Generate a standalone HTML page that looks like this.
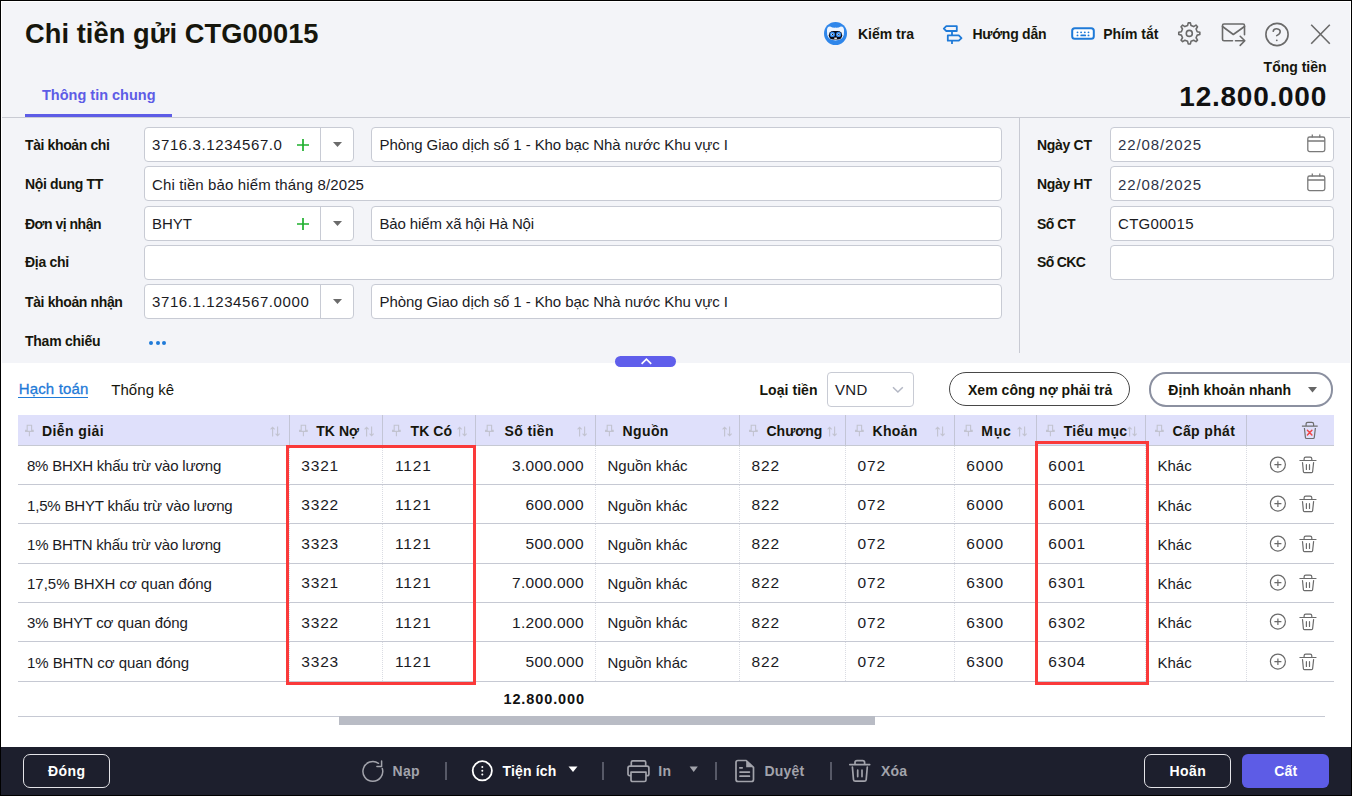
<!DOCTYPE html>
<html><head><meta charset="utf-8"><title>Chi tiền gửi</title>
<style>
html,body{margin:0;padding:0;width:1352px;height:796px;overflow:hidden;background:#fff;}
body{position:relative;font-family:"Liberation Sans", sans-serif;}
.t{position:absolute;white-space:pre;font-family:"Liberation Sans", sans-serif;}
.r{position:absolute;box-sizing:content-box;}
svg.r{overflow:visible;}
</style></head><body>
<div class="r" style="left:0px;top:0px;width:1352px;height:796px;background:#000;"></div>
<div class="r" style="left:1px;top:1px;width:1350px;height:794px;background:#fff;"></div>
<div class="r" style="left:2px;top:2px;width:1348px;height:361px;background:#f3f4f8;"></div>
<div class="r" style="left:2px;top:363px;width:1348px;height:383px;background:#fff;"></div>
<div class="r" style="left:1px;top:747px;width:1350px;height:48px;background:#1d1f2d;"></div>
<div class="t" style="left:25px;top:20.23px;font-size:27.25px;line-height:27.25px;font-weight:bold;color:#16160c;letter-spacing:0.06px;">Chi tiền gửi CTG00015</div>
<div class="t" style="left:42px;top:88.13px;font-size:14.5px;line-height:14.5px;font-weight:bold;color:#5d5ce6;">Thông tin chung</div>
<div class="r" style="left:25px;top:114px;width:147px;height:3px;background:#5d5ce6;"></div>
<div class="r" style="left:2px;top:117px;width:1348px;height:1px;background:#c9cbd3;"></div>
<svg class="r" style="left:824px;top:22px;" width="23" height="23" viewBox="0 0 23 23"><circle cx="11.5" cy="11.5" r="11.5" fill="#2f86ea"/>
<path d="M3 9.5 Q2.6 4.2 6.2 4.4 Q8.5 5.8 11.5 5.6 Q14.5 5.8 16.8 4.4 Q20.4 4.2 20 9.5 Q20.8 18 11.5 18.6 Q2.2 18 3 9.5Z" fill="#eef5ff"/>
<rect x="4.8" y="9" width="13.4" height="8.6" rx="4.3" fill="#0b0b14"/>
<circle cx="8.4" cy="12.4" r="2.6" fill="#2f86ea"/><circle cx="14.6" cy="12.4" r="2.6" fill="#2f86ea"/>
<circle cx="8.4" cy="12.4" r="1.2" fill="#dbe9fb"/><circle cx="14.6" cy="12.4" r="1.2" fill="#dbe9fb"/>
<circle cx="8.6" cy="12.4" r="0.6" fill="#111"/><circle cx="14.8" cy="12.4" r="0.6" fill="#111"/>
<rect x="10.3" y="15.6" width="2.6" height="1.3" fill="#fff"/></svg>
<div class="t" style="left:858px;top:27.15px;font-size:14px;line-height:14px;font-weight:bold;color:#16160c;">Kiểm tra</div>
<svg class="r" style="left:938px;top:20px;" width="26" height="26" viewBox="0 0 26 26"><g fill="none" stroke="#1f7ad8" stroke-width="1.8" stroke-linejoin="round">
<path d="M5.8 8.7 L8.3 6.2 H18.8 V11 H8.3 Z"/><path d="M9.8 15.4 H20.8 L23.5 18.1 L20.8 20.7 H9.8 Z"/>
<path d="M14 11 V15.4 M14 20.7 V24"/></g></svg>
<div class="t" style="left:972.4px;top:27.15px;font-size:14px;line-height:14px;font-weight:bold;color:#16160c;letter-spacing:-0.25px;">Hướng dẫn</div>
<svg class="r" style="left:1071px;top:27px;" width="24" height="13" viewBox="0 0 24 13"><rect x="1.2" y="1.2" width="21.6" height="10.6" rx="2.6" fill="#fff" stroke="#1f7ad8" stroke-width="2"/>
<g fill="#1f7ad8"><circle cx="6.5" cy="5.35" r="0.95"/><circle cx="10.1" cy="5.35" r="0.95"/><circle cx="13.8" cy="5.35" r="0.95"/><circle cx="17.5" cy="5.35" r="0.95"/>
<circle cx="6.5" cy="8.4" r="0.95"/><circle cx="17.5" cy="8.4" r="0.95"/></g><path d="M10.3 8.4 H14.2" stroke="#1f7ad8" stroke-width="1.9" stroke-linecap="round"/></svg>
<div class="t" style="left:1103.2px;top:27.15px;font-size:14px;line-height:14px;font-weight:bold;color:#16160c;">Phím tắt</div>
<svg class="r" style="left:1177px;top:21px;" width="25" height="25" viewBox="0 0 25 25"><g fill="none" stroke="#6a6a6a" stroke-width="1.6" stroke-linejoin="round">
<path d="M10.60 4.48 L11.22 1.86 L13.38 1.86 L14.00 4.48 L16.69 5.60 L18.99 4.18 L20.52 5.71 L19.10 8.01 L20.22 10.70 L22.84 11.32 L22.84 13.48 L20.22 14.10 L19.10 16.79 L20.52 19.09 L18.99 20.62 L16.69 19.20 L14.00 20.32 L13.38 22.94 L11.22 22.94 L10.60 20.32 L7.91 19.20 L5.61 20.62 L4.08 19.09 L5.50 16.79 L4.38 14.10 L1.76 13.48 L1.76 11.32 L4.38 10.70 L5.50 8.01 L4.08 5.71 L5.61 4.18 L7.91 5.60Z"/><circle cx="12.3" cy="12.4" r="3"/></g></svg>
<svg class="r" style="left:1220px;top:22px;" width="27" height="26" viewBox="0 0 27 26"><g fill="none" stroke="#6a6a6a" stroke-width="1.6" stroke-linejoin="round" stroke-linecap="round">
<path d="M12.5 18.8 H4 Q2.5 18.8 2.5 17.3 V3.5 Q2.5 2 4 2 H23 Q24.5 2 24.5 3.5 V12.8"/><path d="M2.5 4.5 L13.3 12.5 L24.5 4.5"/>
<path d="M15.5 18.8 H24.7 M20.2 14.3 L24.8 18.8 L20.2 23.4"/></g></svg>
<svg class="r" style="left:1264px;top:22px;" width="26" height="26" viewBox="0 0 26 26"><g fill="none" stroke="#6a6a6a" stroke-width="1.6" stroke-linecap="round">
<circle cx="13" cy="12.5" r="11.1"/><path d="M9.2 9.3 Q9.6 6.6 12.8 6.7 Q16.3 7 16.2 9.8 Q16.1 12 12.7 13.6"/></g>
<circle cx="12.8" cy="18.3" r="0.9" fill="#6a6a6a"/></svg>
<svg class="r" style="left:1310px;top:24px;" width="21" height="21" viewBox="0 0 21 21"><path d="M1.2 0.8 L19.8 19.7 M19.8 0.8 L1.2 19.7" stroke="#6a6a6a" stroke-width="1.6" fill="none"/></svg>
<div class="t" style="right:25.40000000000009px;top:60.25px;font-size:14px;line-height:14px;font-weight:bold;color:#16160c;text-align:right;">Tổng tiền</div>
<div class="t" style="right:25px;top:83.30px;font-size:28px;line-height:28px;font-weight:bold;color:#111;text-align:right;letter-spacing:0.75px;">12.800.000</div>
<div class="r" style="left:1019px;top:118px;width:1px;height:235px;background:#c8cad3;"></div>
<div class="t" style="left:25px;top:138.15px;font-size:14px;line-height:14px;font-weight:bold;color:#16160c;letter-spacing:-0.38px;">Tài khoản chi</div>
<div class="t" style="left:25px;top:177.45px;font-size:14px;line-height:14px;font-weight:bold;color:#16160c;letter-spacing:-0.33px;">Nội dung TT</div>
<div class="t" style="left:25px;top:216.55px;font-size:14px;line-height:14px;font-weight:bold;color:#16160c;letter-spacing:-0.5px;">Đơn vị nhận</div>
<div class="t" style="left:25px;top:255.45px;font-size:14px;line-height:14px;font-weight:bold;color:#16160c;letter-spacing:-0.31px;">Địa chỉ</div>
<div class="t" style="left:25px;top:294.65px;font-size:14px;line-height:14px;font-weight:bold;color:#16160c;letter-spacing:-0.37px;">Tài khoản nhận</div>
<div class="t" style="left:25px;top:333.95px;font-size:14px;line-height:14px;font-weight:bold;color:#16160c;letter-spacing:-0.25px;">Tham chiếu</div>
<div class="r" style="left:149.0px;top:341px;width:4px;height:4px;background:#1f7ad8;border-radius:50%;"></div>
<div class="r" style="left:155.5px;top:341px;width:4px;height:4px;background:#1f7ad8;border-radius:50%;"></div>
<div class="r" style="left:162.0px;top:341px;width:4px;height:4px;background:#1f7ad8;border-radius:50%;"></div>
<div class="r" style="left:144px;top:127px;width:208px;height:33px;background:#fff;border:1px solid #c8cbd4;border-radius:4px;"></div>
<div class="r" style="left:320px;top:128px;width:1px;height:33px;background:#c8cbd4;"></div>
<div class="t" style="left:152px;top:137.30px;font-size:15px;line-height:15px;font-weight:normal;color:#1b1b1f;letter-spacing:0.6px;">3716.3.1234567.0</div>
<svg class="r" style="left:297px;top:139px;" width="12" height="12" viewBox="0 0 12 12"><path d="M6 0V12M0 6H12" stroke="#1fb02e" stroke-width="1.7"/></svg>
<svg class="r" style="left:333px;top:142px;" width="9" height="6" viewBox="0 0 9 6"><path d="M0 0H9L4.5 5Z" fill="#6b6b6b"/></svg>
<div class="r" style="left:371px;top:127px;width:629px;height:33px;background:#fff;border:1px solid #c8cbd4;border-radius:4px;"></div>
<div class="t" style="left:379.5px;top:137.30px;font-size:15px;line-height:15px;font-weight:normal;color:#1b1b1f;letter-spacing:-0.07px;">Phòng Giao dịch số 1 - Kho bạc Nhà nước Khu vực I</div>
<div class="r" style="left:144px;top:166px;width:856px;height:33px;background:#fff;border:1px solid #c8cbd4;border-radius:4px;"></div>
<div class="t" style="left:152px;top:176.60px;font-size:15px;line-height:15px;font-weight:normal;color:#1b1b1f;letter-spacing:0.12px;">Chi tiền bảo hiểm tháng 8/2025</div>
<div class="r" style="left:144px;top:206px;width:208px;height:33px;background:#fff;border:1px solid #c8cbd4;border-radius:4px;"></div>
<div class="r" style="left:320px;top:207px;width:1px;height:33px;background:#c8cbd4;"></div>
<div class="t" style="left:152px;top:215.70px;font-size:15px;line-height:15px;font-weight:normal;color:#1b1b1f;">BHYT</div>
<svg class="r" style="left:297px;top:218px;" width="12" height="12" viewBox="0 0 12 12"><path d="M6 0V12M0 6H12" stroke="#1fb02e" stroke-width="1.7"/></svg>
<svg class="r" style="left:333px;top:221px;" width="9" height="6" viewBox="0 0 9 6"><path d="M0 0H9L4.5 5Z" fill="#6b6b6b"/></svg>
<div class="r" style="left:371px;top:206px;width:629px;height:33px;background:#fff;border:1px solid #c8cbd4;border-radius:4px;"></div>
<div class="t" style="left:379.5px;top:215.70px;font-size:15px;line-height:15px;font-weight:normal;color:#1b1b1f;letter-spacing:-0.14px;">Bảo hiểm xã hội Hà Nội</div>
<div class="r" style="left:144px;top:245px;width:856px;height:33px;background:#fff;border:1px solid #c8cbd4;border-radius:4px;"></div>
<div class="r" style="left:144px;top:284px;width:208px;height:33px;background:#fff;border:1px solid #c8cbd4;border-radius:4px;"></div>
<div class="r" style="left:320px;top:285px;width:1px;height:33px;background:#c8cbd4;"></div>
<div class="t" style="left:152px;top:293.80px;font-size:15px;line-height:15px;font-weight:normal;color:#1b1b1f;letter-spacing:0.6px;">3716.1.1234567.0000</div>
<svg class="r" style="left:333px;top:299px;" width="9" height="6" viewBox="0 0 9 6"><path d="M0 0H9L4.5 5Z" fill="#6b6b6b"/></svg>
<div class="r" style="left:371px;top:284px;width:629px;height:33px;background:#fff;border:1px solid #c8cbd4;border-radius:4px;"></div>
<div class="t" style="left:379.5px;top:293.80px;font-size:15px;line-height:15px;font-weight:normal;color:#1b1b1f;letter-spacing:-0.07px;">Phòng Giao dịch số 1 - Kho bạc Nhà nước Khu vực I</div>
<div class="t" style="left:1037px;top:138.15px;font-size:14px;line-height:14px;font-weight:bold;color:#16160c;letter-spacing:-0.3px;">Ngày CT</div>
<div class="r" style="left:1110px;top:127px;width:222px;height:33px;background:#fff;border:1px solid #c8cbd4;border-radius:4px;"></div>
<div class="t" style="left:1037px;top:177.45px;font-size:14px;line-height:14px;font-weight:bold;color:#16160c;letter-spacing:-0.3px;">Ngày HT</div>
<div class="r" style="left:1110px;top:166px;width:222px;height:33px;background:#fff;border:1px solid #c8cbd4;border-radius:4px;"></div>
<div class="t" style="left:1037px;top:216.55px;font-size:14px;line-height:14px;font-weight:bold;color:#16160c;letter-spacing:-0.5px;">Số CT</div>
<div class="r" style="left:1110px;top:206px;width:222px;height:33px;background:#fff;border:1px solid #c8cbd4;border-radius:4px;"></div>
<div class="t" style="left:1037px;top:255.45px;font-size:14px;line-height:14px;font-weight:bold;color:#16160c;letter-spacing:-0.67px;">Số CKC</div>
<div class="r" style="left:1110px;top:245px;width:222px;height:33px;background:#fff;border:1px solid #c8cbd4;border-radius:4px;"></div>
<div class="t" style="left:1118px;top:137.30px;font-size:15px;line-height:15px;font-weight:normal;color:#2e3348;letter-spacing:0.9px;">22/08/2025</div>
<div class="t" style="left:1118px;top:176.60px;font-size:15px;line-height:15px;font-weight:normal;color:#2e3348;letter-spacing:0.9px;">22/08/2025</div>
<div class="t" style="left:1118px;top:215.70px;font-size:15px;line-height:15px;font-weight:normal;color:#1b1b1f;letter-spacing:0.3px;">CTG00015</div>
<svg class="r" style="left:1307px;top:134px;" width="19" height="19" viewBox="0 0 19 19"><g fill="none" stroke="#7a7a7a" stroke-width="1.3"><rect x="0.8" y="3" width="17" height="14.6" rx="1.8"/><path d="M0.8 7H17.8M5.3 0.5V3.5M12.8 0.5V3.5"/></g></svg>
<svg class="r" style="left:1307px;top:173px;" width="19" height="19" viewBox="0 0 19 19"><g fill="none" stroke="#7a7a7a" stroke-width="1.3"><rect x="0.8" y="3" width="17" height="14.6" rx="1.8"/><path d="M0.8 7H17.8M5.3 0.5V3.5M12.8 0.5V3.5"/></g></svg>
<div class="r" style="left:615px;top:356px;width:61px;height:11px;background:#5f5eeb;border-radius:5.5px;"></div>
<svg class="r" style="left:640px;top:358px;" width="12" height="8" viewBox="0 0 12 8"><path d="M1.6 5.9 L6.4 1.2 L11.2 5.9" stroke="#fff" stroke-width="1.7" fill="none"/></svg>
<div class="t" style="left:18.75px;top:381.10px;font-size:15px;line-height:15px;font-weight:normal;color:#1f7ad8;letter-spacing:0.15px;-webkit-text-stroke:0.3px #1f7ad8;">Hạch toán</div>
<div class="r" style="left:18px;top:396.6px;width:70px;height:1.3px;background:#1f7ad8;"></div>
<div class="t" style="left:111.25px;top:381.55px;font-size:15px;line-height:15px;font-weight:normal;color:#16160c;letter-spacing:0.05px;">Thống kê</div>
<div class="t" style="left:759.5px;top:383.15px;font-size:14px;line-height:14px;font-weight:bold;color:#16160c;letter-spacing:0.05px;">Loại tiền</div>
<div class="r" style="left:827px;top:372px;width:85px;height:33px;background:#fff;border:1px solid #c8cbd4;border-radius:4px;"></div>
<div class="t" style="left:835px;top:382.30px;font-size:15px;line-height:15px;font-weight:normal;color:#1b1b1f;letter-spacing:0.3px;">VND</div>
<svg class="r" style="left:891.5px;top:386px;" width="12" height="8" viewBox="0 0 12 8"><path d="M1 1.2 L5.9 6 L10.8 1.2" stroke="#b3b7c4" stroke-width="1.5" fill="none"/></svg>
<div class="r" style="left:949px;top:372px;width:178.5px;height:31.5px;border:1.5px solid #474747;border-radius:17px;background:#fff;"></div>
<div class="t" style="left:968px;top:383.15px;font-size:14px;line-height:14px;font-weight:bold;color:#16160c;letter-spacing:0.03px;">Xem công nợ phải trả</div>
<div class="r" style="left:1149px;top:372px;width:180px;height:30.5px;border:2px solid #8b90a0;border-radius:17px;background:#fff;"></div>
<div class="t" style="left:1168.3px;top:383.15px;font-size:14px;line-height:14px;font-weight:bold;color:#16160c;letter-spacing:0.05px;">Định khoản nhanh</div>
<svg class="r" style="left:1308px;top:387px;" width="9" height="6" viewBox="0 0 9 6"><path d="M0 0H9L4.5 5.5Z" fill="#666"/></svg>
<div class="r" style="left:18px;top:415px;width:1316px;height:30px;background:#dfe0fb;"></div>
<div class="r" style="left:18px;top:445px;width:1316px;height:1px;background:#c6c9d3;"></div>
<div class="r" style="left:289px;top:415px;width:1px;height:30px;background:#c3c5d6;"></div>
<div class="r" style="left:382px;top:415px;width:1px;height:30px;background:#c3c5d6;"></div>
<div class="r" style="left:475px;top:415px;width:1px;height:30px;background:#c3c5d6;"></div>
<div class="r" style="left:595px;top:415px;width:1px;height:30px;background:#c3c5d6;"></div>
<div class="r" style="left:739px;top:415px;width:1px;height:30px;background:#c3c5d6;"></div>
<div class="r" style="left:845px;top:415px;width:1px;height:30px;background:#c3c5d6;"></div>
<div class="r" style="left:954px;top:415px;width:1px;height:30px;background:#c3c5d6;"></div>
<div class="r" style="left:1036px;top:415px;width:1px;height:30px;background:#c3c5d6;"></div>
<div class="r" style="left:1145px;top:415px;width:1px;height:30px;background:#c3c5d6;"></div>
<div class="r" style="left:1246px;top:415px;width:1px;height:30px;background:#c3c5d6;"></div>
<div class="t" style="left:42px;top:424.15px;font-size:14px;line-height:14px;font-weight:bold;color:#16160c;letter-spacing:0.4px;">Diễn giải</div>
<svg class="r" style="left:24.5px;top:424px;" width="10" height="13" viewBox="0 0 10 13"><g fill="none" stroke="#c2c3d0" stroke-width="1.1"><path d="M2.2 1.2H6.6V6.4H8.2V7.4H0.6V6.4H2.2Z M4.4 7.4V12.2"/></g></svg>
<svg class="r" style="left:270.2px;top:425.5px;" width="11" height="12" viewBox="0 0 11 12"><g fill="none" stroke="#c2c3d0" stroke-width="1.1"><path d="M2.6 10.5V1.2M0.6 3.4L2.6 1.2L4.6 3.4M7.6 0.5V9.8M5.6 7.6L7.6 9.8L9.6 7.6"/></g></svg>
<div class="t" style="left:316.25px;top:424.15px;font-size:14px;line-height:14px;font-weight:bold;color:#16160c;letter-spacing:0.05px;">TK Nợ</div>
<svg class="r" style="left:298.5px;top:424px;" width="10" height="13" viewBox="0 0 10 13"><g fill="none" stroke="#c2c3d0" stroke-width="1.1"><path d="M2.2 1.2H6.6V6.4H8.2V7.4H0.6V6.4H2.2Z M4.4 7.4V12.2"/></g></svg>
<svg class="r" style="left:364.2px;top:425.5px;" width="11" height="12" viewBox="0 0 11 12"><g fill="none" stroke="#c2c3d0" stroke-width="1.1"><path d="M2.6 10.5V1.2M0.6 3.4L2.6 1.2L4.6 3.4M7.6 0.5V9.8M5.6 7.6L7.6 9.8L9.6 7.6"/></g></svg>
<div class="t" style="left:410.5px;top:424.15px;font-size:14px;line-height:14px;font-weight:bold;color:#16160c;letter-spacing:0.1px;">TK Có</div>
<svg class="r" style="left:391.5px;top:424px;" width="10" height="13" viewBox="0 0 10 13"><g fill="none" stroke="#c2c3d0" stroke-width="1.1"><path d="M2.2 1.2H6.6V6.4H8.2V7.4H0.6V6.4H2.2Z M4.4 7.4V12.2"/></g></svg>
<svg class="r" style="left:457.2px;top:425.5px;" width="11" height="12" viewBox="0 0 11 12"><g fill="none" stroke="#c2c3d0" stroke-width="1.1"><path d="M2.6 10.5V1.2M0.6 3.4L2.6 1.2L4.6 3.4M7.6 0.5V9.8M5.6 7.6L7.6 9.8L9.6 7.6"/></g></svg>
<div class="t" style="left:504.5px;top:424.15px;font-size:14px;line-height:14px;font-weight:bold;color:#16160c;letter-spacing:0.4px;">Số tiền</div>
<svg class="r" style="left:484.5px;top:424px;" width="10" height="13" viewBox="0 0 10 13"><g fill="none" stroke="#c2c3d0" stroke-width="1.1"><path d="M2.2 1.2H6.6V6.4H8.2V7.4H0.6V6.4H2.2Z M4.4 7.4V12.2"/></g></svg>
<svg class="r" style="left:577.2px;top:425.5px;" width="11" height="12" viewBox="0 0 11 12"><g fill="none" stroke="#c2c3d0" stroke-width="1.1"><path d="M2.6 10.5V1.2M0.6 3.4L2.6 1.2L4.6 3.4M7.6 0.5V9.8M5.6 7.6L7.6 9.8L9.6 7.6"/></g></svg>
<div class="t" style="left:622.5px;top:424.15px;font-size:14px;line-height:14px;font-weight:bold;color:#16160c;letter-spacing:0.4px;">Nguồn</div>
<svg class="r" style="left:604.5px;top:424px;" width="10" height="13" viewBox="0 0 10 13"><g fill="none" stroke="#c2c3d0" stroke-width="1.1"><path d="M2.2 1.2H6.6V6.4H8.2V7.4H0.6V6.4H2.2Z M4.4 7.4V12.2"/></g></svg>
<svg class="r" style="left:721.7px;top:425.5px;" width="11" height="12" viewBox="0 0 11 12"><g fill="none" stroke="#c2c3d0" stroke-width="1.1"><path d="M2.6 10.5V1.2M0.6 3.4L2.6 1.2L4.6 3.4M7.6 0.5V9.8M5.6 7.6L7.6 9.8L9.6 7.6"/></g></svg>
<div class="t" style="left:766.5px;top:424.15px;font-size:14px;line-height:14px;font-weight:bold;color:#16160c;">Chương</div>
<svg class="r" style="left:748.5px;top:424px;" width="10" height="13" viewBox="0 0 10 13"><g fill="none" stroke="#c2c3d0" stroke-width="1.1"><path d="M2.2 1.2H6.6V6.4H8.2V7.4H0.6V6.4H2.2Z M4.4 7.4V12.2"/></g></svg>
<svg class="r" style="left:826.7px;top:425.5px;" width="11" height="12" viewBox="0 0 11 12"><g fill="none" stroke="#c2c3d0" stroke-width="1.1"><path d="M2.6 10.5V1.2M0.6 3.4L2.6 1.2L4.6 3.4M7.6 0.5V9.8M5.6 7.6L7.6 9.8L9.6 7.6"/></g></svg>
<div class="t" style="left:872.5px;top:424.15px;font-size:14px;line-height:14px;font-weight:bold;color:#16160c;letter-spacing:0.3px;">Khoản</div>
<svg class="r" style="left:854.5px;top:424px;" width="10" height="13" viewBox="0 0 10 13"><g fill="none" stroke="#c2c3d0" stroke-width="1.1"><path d="M2.2 1.2H6.6V6.4H8.2V7.4H0.6V6.4H2.2Z M4.4 7.4V12.2"/></g></svg>
<svg class="r" style="left:934.7px;top:425.5px;" width="11" height="12" viewBox="0 0 11 12"><g fill="none" stroke="#c2c3d0" stroke-width="1.1"><path d="M2.6 10.5V1.2M0.6 3.4L2.6 1.2L4.6 3.4M7.6 0.5V9.8M5.6 7.6L7.6 9.8L9.6 7.6"/></g></svg>
<div class="t" style="left:981.25px;top:424.15px;font-size:14px;line-height:14px;font-weight:bold;color:#16160c;letter-spacing:0.8px;">Mục</div>
<svg class="r" style="left:963.5px;top:424px;" width="10" height="13" viewBox="0 0 10 13"><g fill="none" stroke="#c2c3d0" stroke-width="1.1"><path d="M2.2 1.2H6.6V6.4H8.2V7.4H0.6V6.4H2.2Z M4.4 7.4V12.2"/></g></svg>
<svg class="r" style="left:1017.2px;top:425.5px;" width="11" height="12" viewBox="0 0 11 12"><g fill="none" stroke="#c2c3d0" stroke-width="1.1"><path d="M2.6 10.5V1.2M0.6 3.4L2.6 1.2L4.6 3.4M7.6 0.5V9.8M5.6 7.6L7.6 9.8L9.6 7.6"/></g></svg>
<div class="t" style="left:1063.75px;top:424.15px;font-size:14px;line-height:14px;font-weight:bold;color:#16160c;letter-spacing:0.3px;">Tiểu mục</div>
<svg class="r" style="left:1045.5px;top:424px;" width="10" height="13" viewBox="0 0 10 13"><g fill="none" stroke="#c2c3d0" stroke-width="1.1"><path d="M2.2 1.2H6.6V6.4H8.2V7.4H0.6V6.4H2.2Z M4.4 7.4V12.2"/></g></svg>
<svg class="r" style="left:1127.2px;top:425.5px;" width="11" height="12" viewBox="0 0 11 12"><g fill="none" stroke="#c2c3d0" stroke-width="1.1"><path d="M2.6 10.5V1.2M0.6 3.4L2.6 1.2L4.6 3.4M7.6 0.5V9.8M5.6 7.6L7.6 9.8L9.6 7.6"/></g></svg>
<div class="t" style="left:1172.5px;top:424.15px;font-size:14px;line-height:14px;font-weight:bold;color:#16160c;letter-spacing:0.35px;">Cấp phát</div>
<svg class="r" style="left:1154.5px;top:424px;" width="10" height="13" viewBox="0 0 10 13"><g fill="none" stroke="#c2c3d0" stroke-width="1.1"><path d="M2.2 1.2H6.6V6.4H8.2V7.4H0.6V6.4H2.2Z M4.4 7.4V12.2"/></g></svg>
<svg class="r" style="left:1301px;top:421px;" width="18" height="19" viewBox="0 0 18 19"><g fill="none" stroke="#6e6e6e" stroke-width="1.2" stroke-linejoin="round"><path d="M0.9 5.2H16.7M5.1 5.2V3 Q5.1 1.3 6.8 1.3H10.9 Q12.6 1.3 12.6 3V5.2M3.4 7L4.4 16.4 Q4.5 17.5 5.6 17.5H12.1 Q13.2 17.5 13.3 16.4L14.4 7"/></g>
<path d="M6.4 9.2L10.9 14M10.9 9.2L6.4 14" stroke="#f04545" stroke-width="1.5" stroke-linecap="round"/></svg>
<div class="r" style="left:18px;top:484px;width:1316px;height:1px;background:#c6c9d3;"></div>
<div class="r" style="left:289px;top:446px;width:1px;height:38px;background-image:linear-gradient(#dadce3 50%, transparent 50%);background-size:1px 2px;"></div>
<div class="r" style="left:382px;top:446px;width:1px;height:38px;background-image:linear-gradient(#dadce3 50%, transparent 50%);background-size:1px 2px;"></div>
<div class="r" style="left:475px;top:446px;width:1px;height:38px;background-image:linear-gradient(#dadce3 50%, transparent 50%);background-size:1px 2px;"></div>
<div class="r" style="left:595px;top:446px;width:1px;height:38px;background-image:linear-gradient(#dadce3 50%, transparent 50%);background-size:1px 2px;"></div>
<div class="r" style="left:739px;top:446px;width:1px;height:38px;background-image:linear-gradient(#dadce3 50%, transparent 50%);background-size:1px 2px;"></div>
<div class="r" style="left:845px;top:446px;width:1px;height:38px;background-image:linear-gradient(#dadce3 50%, transparent 50%);background-size:1px 2px;"></div>
<div class="r" style="left:954px;top:446px;width:1px;height:38px;background-image:linear-gradient(#dadce3 50%, transparent 50%);background-size:1px 2px;"></div>
<div class="r" style="left:1036px;top:446px;width:1px;height:38px;background-image:linear-gradient(#dadce3 50%, transparent 50%);background-size:1px 2px;"></div>
<div class="r" style="left:1145px;top:446px;width:1px;height:38px;background-image:linear-gradient(#dadce3 50%, transparent 50%);background-size:1px 2px;"></div>
<div class="r" style="left:1246px;top:446px;width:1px;height:38px;background-image:linear-gradient(#dadce3 50%, transparent 50%);background-size:1px 2px;"></div>
<div class="t" style="left:27px;top:458.30px;font-size:15px;line-height:15px;font-weight:normal;color:#1b1b1f;letter-spacing:-0.23px;">8% BHXH khấu trừ vào lương</div>
<div class="t" style="left:301.25px;top:457.88px;font-size:15.5px;line-height:15.5px;font-weight:normal;color:#1b1b1f;letter-spacing:0.82px;">3321</div>
<div class="t" style="left:395px;top:457.88px;font-size:15.5px;line-height:15.5px;font-weight:normal;color:#1b1b1f;letter-spacing:0.82px;">1121</div>
<div class="t" style="right:768px;top:457.88px;font-size:15.5px;line-height:15.5px;font-weight:normal;color:#1b1b1f;text-align:right;letter-spacing:0.34px;">3.000.000</div>
<div class="t" style="left:607.5px;top:458.30px;font-size:15px;line-height:15px;font-weight:normal;color:#1b1b1f;">Nguồn khác</div>
<div class="t" style="left:751.5px;top:457.88px;font-size:15.5px;line-height:15.5px;font-weight:normal;color:#1b1b1f;letter-spacing:0.82px;">822</div>
<div class="t" style="left:857.5px;top:457.88px;font-size:15.5px;line-height:15.5px;font-weight:normal;color:#1b1b1f;letter-spacing:0.82px;">072</div>
<div class="t" style="left:966.25px;top:457.88px;font-size:15.5px;line-height:15.5px;font-weight:normal;color:#1b1b1f;letter-spacing:0.82px;">6000</div>
<div class="t" style="left:1048.25px;top:457.88px;font-size:15.5px;line-height:15.5px;font-weight:normal;color:#1b1b1f;letter-spacing:0.82px;">6001</div>
<div class="t" style="left:1157.5px;top:458.30px;font-size:15px;line-height:15px;font-weight:normal;color:#1b1b1f;">Khác</div>
<svg class="r" style="left:1269px;top:456px;" width="18" height="18" viewBox="0 0 18 18"><g fill="none" stroke="#6a6a6a" stroke-width="1.2"><circle cx="8.9" cy="8.6" r="7.5"/><path d="M8.9 5.4V11.9M5.4 8.6H12.4"/></g></svg>
<svg class="r" style="left:1299px;top:456px;" width="18" height="18" viewBox="0 0 18 18"><g fill="none" stroke="#6a6a6a" stroke-width="1.2" stroke-linejoin="round" stroke-linecap="round"><path d="M0.9 4.5H17M5.1 4.5V2.8 Q5.1 1.1 6.8 1.1H11.1 Q12.8 1.1 12.8 2.8V4.5M3.5 6.5L4.4 15.8 Q4.5 16.6 5.4 16.6H12.6 Q13.5 16.6 13.6 15.8L14.6 6.5M7.4 8.7V13.4M10.5 8.7V13.4"/></g></svg>
<div class="r" style="left:18px;top:523px;width:1316px;height:1px;background:#c6c9d3;"></div>
<div class="r" style="left:289px;top:485px;width:1px;height:38px;background-image:linear-gradient(#dadce3 50%, transparent 50%);background-size:1px 2px;"></div>
<div class="r" style="left:382px;top:485px;width:1px;height:38px;background-image:linear-gradient(#dadce3 50%, transparent 50%);background-size:1px 2px;"></div>
<div class="r" style="left:475px;top:485px;width:1px;height:38px;background-image:linear-gradient(#dadce3 50%, transparent 50%);background-size:1px 2px;"></div>
<div class="r" style="left:595px;top:485px;width:1px;height:38px;background-image:linear-gradient(#dadce3 50%, transparent 50%);background-size:1px 2px;"></div>
<div class="r" style="left:739px;top:485px;width:1px;height:38px;background-image:linear-gradient(#dadce3 50%, transparent 50%);background-size:1px 2px;"></div>
<div class="r" style="left:845px;top:485px;width:1px;height:38px;background-image:linear-gradient(#dadce3 50%, transparent 50%);background-size:1px 2px;"></div>
<div class="r" style="left:954px;top:485px;width:1px;height:38px;background-image:linear-gradient(#dadce3 50%, transparent 50%);background-size:1px 2px;"></div>
<div class="r" style="left:1036px;top:485px;width:1px;height:38px;background-image:linear-gradient(#dadce3 50%, transparent 50%);background-size:1px 2px;"></div>
<div class="r" style="left:1145px;top:485px;width:1px;height:38px;background-image:linear-gradient(#dadce3 50%, transparent 50%);background-size:1px 2px;"></div>
<div class="r" style="left:1246px;top:485px;width:1px;height:38px;background-image:linear-gradient(#dadce3 50%, transparent 50%);background-size:1px 2px;"></div>
<div class="t" style="left:27px;top:497.50px;font-size:15px;line-height:15px;font-weight:normal;color:#1b1b1f;letter-spacing:-0.18px;">1,5% BHYT khấu trừ vào lương</div>
<div class="t" style="left:301.25px;top:497.08px;font-size:15.5px;line-height:15.5px;font-weight:normal;color:#1b1b1f;letter-spacing:0.82px;">3322</div>
<div class="t" style="left:395px;top:497.08px;font-size:15.5px;line-height:15.5px;font-weight:normal;color:#1b1b1f;letter-spacing:0.82px;">1121</div>
<div class="t" style="right:768px;top:497.08px;font-size:15.5px;line-height:15.5px;font-weight:normal;color:#1b1b1f;text-align:right;letter-spacing:0.34px;">600.000</div>
<div class="t" style="left:607.5px;top:497.50px;font-size:15px;line-height:15px;font-weight:normal;color:#1b1b1f;">Nguồn khác</div>
<div class="t" style="left:751.5px;top:497.08px;font-size:15.5px;line-height:15.5px;font-weight:normal;color:#1b1b1f;letter-spacing:0.82px;">822</div>
<div class="t" style="left:857.5px;top:497.08px;font-size:15.5px;line-height:15.5px;font-weight:normal;color:#1b1b1f;letter-spacing:0.82px;">072</div>
<div class="t" style="left:966.25px;top:497.08px;font-size:15.5px;line-height:15.5px;font-weight:normal;color:#1b1b1f;letter-spacing:0.82px;">6000</div>
<div class="t" style="left:1048.25px;top:497.08px;font-size:15.5px;line-height:15.5px;font-weight:normal;color:#1b1b1f;letter-spacing:0.82px;">6001</div>
<div class="t" style="left:1157.5px;top:497.50px;font-size:15px;line-height:15px;font-weight:normal;color:#1b1b1f;">Khác</div>
<svg class="r" style="left:1269px;top:495px;" width="18" height="18" viewBox="0 0 18 18"><g fill="none" stroke="#6a6a6a" stroke-width="1.2"><circle cx="8.9" cy="8.6" r="7.5"/><path d="M8.9 5.4V11.9M5.4 8.6H12.4"/></g></svg>
<svg class="r" style="left:1299px;top:495px;" width="18" height="18" viewBox="0 0 18 18"><g fill="none" stroke="#6a6a6a" stroke-width="1.2" stroke-linejoin="round" stroke-linecap="round"><path d="M0.9 4.5H17M5.1 4.5V2.8 Q5.1 1.1 6.8 1.1H11.1 Q12.8 1.1 12.8 2.8V4.5M3.5 6.5L4.4 15.8 Q4.5 16.6 5.4 16.6H12.6 Q13.5 16.6 13.6 15.8L14.6 6.5M7.4 8.7V13.4M10.5 8.7V13.4"/></g></svg>
<div class="r" style="left:18px;top:563px;width:1316px;height:1px;background:#c6c9d3;"></div>
<div class="r" style="left:289px;top:524px;width:1px;height:39px;background-image:linear-gradient(#dadce3 50%, transparent 50%);background-size:1px 2px;"></div>
<div class="r" style="left:382px;top:524px;width:1px;height:39px;background-image:linear-gradient(#dadce3 50%, transparent 50%);background-size:1px 2px;"></div>
<div class="r" style="left:475px;top:524px;width:1px;height:39px;background-image:linear-gradient(#dadce3 50%, transparent 50%);background-size:1px 2px;"></div>
<div class="r" style="left:595px;top:524px;width:1px;height:39px;background-image:linear-gradient(#dadce3 50%, transparent 50%);background-size:1px 2px;"></div>
<div class="r" style="left:739px;top:524px;width:1px;height:39px;background-image:linear-gradient(#dadce3 50%, transparent 50%);background-size:1px 2px;"></div>
<div class="r" style="left:845px;top:524px;width:1px;height:39px;background-image:linear-gradient(#dadce3 50%, transparent 50%);background-size:1px 2px;"></div>
<div class="r" style="left:954px;top:524px;width:1px;height:39px;background-image:linear-gradient(#dadce3 50%, transparent 50%);background-size:1px 2px;"></div>
<div class="r" style="left:1036px;top:524px;width:1px;height:39px;background-image:linear-gradient(#dadce3 50%, transparent 50%);background-size:1px 2px;"></div>
<div class="r" style="left:1145px;top:524px;width:1px;height:39px;background-image:linear-gradient(#dadce3 50%, transparent 50%);background-size:1px 2px;"></div>
<div class="r" style="left:1246px;top:524px;width:1px;height:39px;background-image:linear-gradient(#dadce3 50%, transparent 50%);background-size:1px 2px;"></div>
<div class="t" style="left:27px;top:536.60px;font-size:15px;line-height:15px;font-weight:normal;color:#1b1b1f;letter-spacing:-0.2px;">1% BHTN khấu trừ vào lương</div>
<div class="t" style="left:301.25px;top:536.18px;font-size:15.5px;line-height:15.5px;font-weight:normal;color:#1b1b1f;letter-spacing:0.82px;">3323</div>
<div class="t" style="left:395px;top:536.18px;font-size:15.5px;line-height:15.5px;font-weight:normal;color:#1b1b1f;letter-spacing:0.82px;">1121</div>
<div class="t" style="right:768px;top:536.18px;font-size:15.5px;line-height:15.5px;font-weight:normal;color:#1b1b1f;text-align:right;letter-spacing:0.34px;">500.000</div>
<div class="t" style="left:607.5px;top:536.60px;font-size:15px;line-height:15px;font-weight:normal;color:#1b1b1f;">Nguồn khác</div>
<div class="t" style="left:751.5px;top:536.18px;font-size:15.5px;line-height:15.5px;font-weight:normal;color:#1b1b1f;letter-spacing:0.82px;">822</div>
<div class="t" style="left:857.5px;top:536.18px;font-size:15.5px;line-height:15.5px;font-weight:normal;color:#1b1b1f;letter-spacing:0.82px;">072</div>
<div class="t" style="left:966.25px;top:536.18px;font-size:15.5px;line-height:15.5px;font-weight:normal;color:#1b1b1f;letter-spacing:0.82px;">6000</div>
<div class="t" style="left:1048.25px;top:536.18px;font-size:15.5px;line-height:15.5px;font-weight:normal;color:#1b1b1f;letter-spacing:0.82px;">6001</div>
<div class="t" style="left:1157.5px;top:536.60px;font-size:15px;line-height:15px;font-weight:normal;color:#1b1b1f;">Khác</div>
<svg class="r" style="left:1269px;top:535px;" width="18" height="18" viewBox="0 0 18 18"><g fill="none" stroke="#6a6a6a" stroke-width="1.2"><circle cx="8.9" cy="8.6" r="7.5"/><path d="M8.9 5.4V11.9M5.4 8.6H12.4"/></g></svg>
<svg class="r" style="left:1299px;top:535px;" width="18" height="18" viewBox="0 0 18 18"><g fill="none" stroke="#6a6a6a" stroke-width="1.2" stroke-linejoin="round" stroke-linecap="round"><path d="M0.9 4.5H17M5.1 4.5V2.8 Q5.1 1.1 6.8 1.1H11.1 Q12.8 1.1 12.8 2.8V4.5M3.5 6.5L4.4 15.8 Q4.5 16.6 5.4 16.6H12.6 Q13.5 16.6 13.6 15.8L14.6 6.5M7.4 8.7V13.4M10.5 8.7V13.4"/></g></svg>
<div class="r" style="left:18px;top:602px;width:1316px;height:1px;background:#c6c9d3;"></div>
<div class="r" style="left:289px;top:564px;width:1px;height:38px;background-image:linear-gradient(#dadce3 50%, transparent 50%);background-size:1px 2px;"></div>
<div class="r" style="left:382px;top:564px;width:1px;height:38px;background-image:linear-gradient(#dadce3 50%, transparent 50%);background-size:1px 2px;"></div>
<div class="r" style="left:475px;top:564px;width:1px;height:38px;background-image:linear-gradient(#dadce3 50%, transparent 50%);background-size:1px 2px;"></div>
<div class="r" style="left:595px;top:564px;width:1px;height:38px;background-image:linear-gradient(#dadce3 50%, transparent 50%);background-size:1px 2px;"></div>
<div class="r" style="left:739px;top:564px;width:1px;height:38px;background-image:linear-gradient(#dadce3 50%, transparent 50%);background-size:1px 2px;"></div>
<div class="r" style="left:845px;top:564px;width:1px;height:38px;background-image:linear-gradient(#dadce3 50%, transparent 50%);background-size:1px 2px;"></div>
<div class="r" style="left:954px;top:564px;width:1px;height:38px;background-image:linear-gradient(#dadce3 50%, transparent 50%);background-size:1px 2px;"></div>
<div class="r" style="left:1036px;top:564px;width:1px;height:38px;background-image:linear-gradient(#dadce3 50%, transparent 50%);background-size:1px 2px;"></div>
<div class="r" style="left:1145px;top:564px;width:1px;height:38px;background-image:linear-gradient(#dadce3 50%, transparent 50%);background-size:1px 2px;"></div>
<div class="r" style="left:1246px;top:564px;width:1px;height:38px;background-image:linear-gradient(#dadce3 50%, transparent 50%);background-size:1px 2px;"></div>
<div class="t" style="left:27px;top:575.70px;font-size:15px;line-height:15px;font-weight:normal;color:#1b1b1f;">17,5% BHXH cơ quan đóng</div>
<div class="t" style="left:301.25px;top:575.28px;font-size:15.5px;line-height:15.5px;font-weight:normal;color:#1b1b1f;letter-spacing:0.82px;">3321</div>
<div class="t" style="left:395px;top:575.28px;font-size:15.5px;line-height:15.5px;font-weight:normal;color:#1b1b1f;letter-spacing:0.82px;">1121</div>
<div class="t" style="right:768px;top:575.28px;font-size:15.5px;line-height:15.5px;font-weight:normal;color:#1b1b1f;text-align:right;letter-spacing:0.34px;">7.000.000</div>
<div class="t" style="left:607.5px;top:575.70px;font-size:15px;line-height:15px;font-weight:normal;color:#1b1b1f;">Nguồn khác</div>
<div class="t" style="left:751.5px;top:575.28px;font-size:15.5px;line-height:15.5px;font-weight:normal;color:#1b1b1f;letter-spacing:0.82px;">822</div>
<div class="t" style="left:857.5px;top:575.28px;font-size:15.5px;line-height:15.5px;font-weight:normal;color:#1b1b1f;letter-spacing:0.82px;">072</div>
<div class="t" style="left:966.25px;top:575.28px;font-size:15.5px;line-height:15.5px;font-weight:normal;color:#1b1b1f;letter-spacing:0.82px;">6300</div>
<div class="t" style="left:1048.25px;top:575.28px;font-size:15.5px;line-height:15.5px;font-weight:normal;color:#1b1b1f;letter-spacing:0.82px;">6301</div>
<div class="t" style="left:1157.5px;top:575.70px;font-size:15px;line-height:15px;font-weight:normal;color:#1b1b1f;">Khác</div>
<svg class="r" style="left:1269px;top:574px;" width="18" height="18" viewBox="0 0 18 18"><g fill="none" stroke="#6a6a6a" stroke-width="1.2"><circle cx="8.9" cy="8.6" r="7.5"/><path d="M8.9 5.4V11.9M5.4 8.6H12.4"/></g></svg>
<svg class="r" style="left:1299px;top:574px;" width="18" height="18" viewBox="0 0 18 18"><g fill="none" stroke="#6a6a6a" stroke-width="1.2" stroke-linejoin="round" stroke-linecap="round"><path d="M0.9 4.5H17M5.1 4.5V2.8 Q5.1 1.1 6.8 1.1H11.1 Q12.8 1.1 12.8 2.8V4.5M3.5 6.5L4.4 15.8 Q4.5 16.6 5.4 16.6H12.6 Q13.5 16.6 13.6 15.8L14.6 6.5M7.4 8.7V13.4M10.5 8.7V13.4"/></g></svg>
<div class="r" style="left:18px;top:641px;width:1316px;height:1px;background:#c6c9d3;"></div>
<div class="r" style="left:289px;top:603px;width:1px;height:38px;background-image:linear-gradient(#dadce3 50%, transparent 50%);background-size:1px 2px;"></div>
<div class="r" style="left:382px;top:603px;width:1px;height:38px;background-image:linear-gradient(#dadce3 50%, transparent 50%);background-size:1px 2px;"></div>
<div class="r" style="left:475px;top:603px;width:1px;height:38px;background-image:linear-gradient(#dadce3 50%, transparent 50%);background-size:1px 2px;"></div>
<div class="r" style="left:595px;top:603px;width:1px;height:38px;background-image:linear-gradient(#dadce3 50%, transparent 50%);background-size:1px 2px;"></div>
<div class="r" style="left:739px;top:603px;width:1px;height:38px;background-image:linear-gradient(#dadce3 50%, transparent 50%);background-size:1px 2px;"></div>
<div class="r" style="left:845px;top:603px;width:1px;height:38px;background-image:linear-gradient(#dadce3 50%, transparent 50%);background-size:1px 2px;"></div>
<div class="r" style="left:954px;top:603px;width:1px;height:38px;background-image:linear-gradient(#dadce3 50%, transparent 50%);background-size:1px 2px;"></div>
<div class="r" style="left:1036px;top:603px;width:1px;height:38px;background-image:linear-gradient(#dadce3 50%, transparent 50%);background-size:1px 2px;"></div>
<div class="r" style="left:1145px;top:603px;width:1px;height:38px;background-image:linear-gradient(#dadce3 50%, transparent 50%);background-size:1px 2px;"></div>
<div class="r" style="left:1246px;top:603px;width:1px;height:38px;background-image:linear-gradient(#dadce3 50%, transparent 50%);background-size:1px 2px;"></div>
<div class="t" style="left:27px;top:615.30px;font-size:15px;line-height:15px;font-weight:normal;color:#1b1b1f;letter-spacing:-0.07px;">3% BHYT cơ quan đóng</div>
<div class="t" style="left:301.25px;top:614.88px;font-size:15.5px;line-height:15.5px;font-weight:normal;color:#1b1b1f;letter-spacing:0.82px;">3322</div>
<div class="t" style="left:395px;top:614.88px;font-size:15.5px;line-height:15.5px;font-weight:normal;color:#1b1b1f;letter-spacing:0.82px;">1121</div>
<div class="t" style="right:768px;top:614.88px;font-size:15.5px;line-height:15.5px;font-weight:normal;color:#1b1b1f;text-align:right;letter-spacing:0.34px;">1.200.000</div>
<div class="t" style="left:607.5px;top:615.30px;font-size:15px;line-height:15px;font-weight:normal;color:#1b1b1f;">Nguồn khác</div>
<div class="t" style="left:751.5px;top:614.88px;font-size:15.5px;line-height:15.5px;font-weight:normal;color:#1b1b1f;letter-spacing:0.82px;">822</div>
<div class="t" style="left:857.5px;top:614.88px;font-size:15.5px;line-height:15.5px;font-weight:normal;color:#1b1b1f;letter-spacing:0.82px;">072</div>
<div class="t" style="left:966.25px;top:614.88px;font-size:15.5px;line-height:15.5px;font-weight:normal;color:#1b1b1f;letter-spacing:0.82px;">6300</div>
<div class="t" style="left:1048.25px;top:614.88px;font-size:15.5px;line-height:15.5px;font-weight:normal;color:#1b1b1f;letter-spacing:0.82px;">6302</div>
<div class="t" style="left:1157.5px;top:615.30px;font-size:15px;line-height:15px;font-weight:normal;color:#1b1b1f;">Khác</div>
<svg class="r" style="left:1269px;top:613px;" width="18" height="18" viewBox="0 0 18 18"><g fill="none" stroke="#6a6a6a" stroke-width="1.2"><circle cx="8.9" cy="8.6" r="7.5"/><path d="M8.9 5.4V11.9M5.4 8.6H12.4"/></g></svg>
<svg class="r" style="left:1299px;top:613px;" width="18" height="18" viewBox="0 0 18 18"><g fill="none" stroke="#6a6a6a" stroke-width="1.2" stroke-linejoin="round" stroke-linecap="round"><path d="M0.9 4.5H17M5.1 4.5V2.8 Q5.1 1.1 6.8 1.1H11.1 Q12.8 1.1 12.8 2.8V4.5M3.5 6.5L4.4 15.8 Q4.5 16.6 5.4 16.6H12.6 Q13.5 16.6 13.6 15.8L14.6 6.5M7.4 8.7V13.4M10.5 8.7V13.4"/></g></svg>
<div class="r" style="left:18px;top:681px;width:1316px;height:1px;background:#c6c9d3;"></div>
<div class="r" style="left:289px;top:642px;width:1px;height:39px;background-image:linear-gradient(#dadce3 50%, transparent 50%);background-size:1px 2px;"></div>
<div class="r" style="left:382px;top:642px;width:1px;height:39px;background-image:linear-gradient(#dadce3 50%, transparent 50%);background-size:1px 2px;"></div>
<div class="r" style="left:475px;top:642px;width:1px;height:39px;background-image:linear-gradient(#dadce3 50%, transparent 50%);background-size:1px 2px;"></div>
<div class="r" style="left:595px;top:642px;width:1px;height:39px;background-image:linear-gradient(#dadce3 50%, transparent 50%);background-size:1px 2px;"></div>
<div class="r" style="left:739px;top:642px;width:1px;height:39px;background-image:linear-gradient(#dadce3 50%, transparent 50%);background-size:1px 2px;"></div>
<div class="r" style="left:845px;top:642px;width:1px;height:39px;background-image:linear-gradient(#dadce3 50%, transparent 50%);background-size:1px 2px;"></div>
<div class="r" style="left:954px;top:642px;width:1px;height:39px;background-image:linear-gradient(#dadce3 50%, transparent 50%);background-size:1px 2px;"></div>
<div class="r" style="left:1036px;top:642px;width:1px;height:39px;background-image:linear-gradient(#dadce3 50%, transparent 50%);background-size:1px 2px;"></div>
<div class="r" style="left:1145px;top:642px;width:1px;height:39px;background-image:linear-gradient(#dadce3 50%, transparent 50%);background-size:1px 2px;"></div>
<div class="r" style="left:1246px;top:642px;width:1px;height:39px;background-image:linear-gradient(#dadce3 50%, transparent 50%);background-size:1px 2px;"></div>
<div class="t" style="left:27px;top:654.50px;font-size:15px;line-height:15px;font-weight:normal;color:#1b1b1f;letter-spacing:-0.06px;">1% BHTN cơ quan đóng</div>
<div class="t" style="left:301.25px;top:654.08px;font-size:15.5px;line-height:15.5px;font-weight:normal;color:#1b1b1f;letter-spacing:0.82px;">3323</div>
<div class="t" style="left:395px;top:654.08px;font-size:15.5px;line-height:15.5px;font-weight:normal;color:#1b1b1f;letter-spacing:0.82px;">1121</div>
<div class="t" style="right:768px;top:654.08px;font-size:15.5px;line-height:15.5px;font-weight:normal;color:#1b1b1f;text-align:right;letter-spacing:0.34px;">500.000</div>
<div class="t" style="left:607.5px;top:654.50px;font-size:15px;line-height:15px;font-weight:normal;color:#1b1b1f;">Nguồn khác</div>
<div class="t" style="left:751.5px;top:654.08px;font-size:15.5px;line-height:15.5px;font-weight:normal;color:#1b1b1f;letter-spacing:0.82px;">822</div>
<div class="t" style="left:857.5px;top:654.08px;font-size:15.5px;line-height:15.5px;font-weight:normal;color:#1b1b1f;letter-spacing:0.82px;">072</div>
<div class="t" style="left:966.25px;top:654.08px;font-size:15.5px;line-height:15.5px;font-weight:normal;color:#1b1b1f;letter-spacing:0.82px;">6300</div>
<div class="t" style="left:1048.25px;top:654.08px;font-size:15.5px;line-height:15.5px;font-weight:normal;color:#1b1b1f;letter-spacing:0.82px;">6304</div>
<div class="t" style="left:1157.5px;top:654.50px;font-size:15px;line-height:15px;font-weight:normal;color:#1b1b1f;">Khác</div>
<svg class="r" style="left:1269px;top:653px;" width="18" height="18" viewBox="0 0 18 18"><g fill="none" stroke="#6a6a6a" stroke-width="1.2"><circle cx="8.9" cy="8.6" r="7.5"/><path d="M8.9 5.4V11.9M5.4 8.6H12.4"/></g></svg>
<svg class="r" style="left:1299px;top:653px;" width="18" height="18" viewBox="0 0 18 18"><g fill="none" stroke="#6a6a6a" stroke-width="1.2" stroke-linejoin="round" stroke-linecap="round"><path d="M0.9 4.5H17M5.1 4.5V2.8 Q5.1 1.1 6.8 1.1H11.1 Q12.8 1.1 12.8 2.8V4.5M3.5 6.5L4.4 15.8 Q4.5 16.6 5.4 16.6H12.6 Q13.5 16.6 13.6 15.8L14.6 6.5M7.4 8.7V13.4M10.5 8.7V13.4"/></g></svg>
<div class="t" style="right:767px;top:691.73px;font-size:14.5px;line-height:14.5px;font-weight:bold;color:#111;text-align:right;letter-spacing:0.9px;">12.800.000</div>
<div class="r" style="left:18px;top:716px;width:1307px;height:1px;background:#c6c9d3;"></div>
<div class="r" style="left:339px;top:716px;width:536px;height:9px;background:#b9bcc5;"></div>
<div class="r" style="left:286px;top:445px;width:184px;height:234px;border:3px solid #fa3a3a;"></div>
<div class="r" style="left:1035px;top:441px;width:108px;height:238px;border:3px solid #fa3a3a;"></div>
<div class="r" style="left:23px;top:754px;width:84.5px;height:31.5px;border:1.5px solid #e4e4e8;border-radius:7px;"></div>
<div class="t" style="left:48px;top:764.15px;font-size:14px;line-height:14px;font-weight:bold;color:#fff;letter-spacing:0.4px;">Đóng</div>
<div class="r" style="left:1144px;top:754px;width:84.5px;height:31.5px;border:1.5px solid #e4e4e8;border-radius:7px;"></div>
<div class="t" style="left:1169.5px;top:764.15px;font-size:14px;line-height:14px;font-weight:bold;color:#fff;letter-spacing:0.4px;">Hoãn</div>
<div class="r" style="left:1242px;top:754px;width:87px;height:34px;background:#5d5ce6;border-radius:6px;"></div>
<div class="t" style="left:1274.3px;top:764.15px;font-size:14px;line-height:14px;font-weight:bold;color:#fff;letter-spacing:0.1px;">Cất</div>
<svg class="r" style="left:360px;top:758px;" width="26" height="26" viewBox="0 0 26 26"><g fill="none" stroke="#a2a3ab" stroke-width="1.5" stroke-linecap="round" stroke-linejoin="round"><path d="M22.3 10.5 A9.9 9.9 0 1 1 18.5 5.3"/><path d="M21.6 3V8.6H16.9"/></g></svg>
<div class="t" style="left:392.6px;top:764.15px;font-size:14px;line-height:14px;font-weight:bold;color:#a2a3ab;letter-spacing:0.3px;">Nạp</div>
<div class="r" style="left:445px;top:762px;width:2px;height:18px;background:#575967;"></div>
<svg class="r" style="left:470px;top:758px;" width="26" height="26" viewBox="0 0 26 26"><g fill="none" stroke="#fff" stroke-width="1.8"><circle cx="12.3" cy="12.8" r="9.6"/></g><g fill="#fff"><circle cx="12.3" cy="9" r="1"/><circle cx="12.3" cy="12.8" r="1"/><circle cx="12.3" cy="16.4" r="1"/></g></svg>
<div class="t" style="left:502.6px;top:764.15px;font-size:14px;line-height:14px;font-weight:bold;color:#fff;letter-spacing:0.15px;">Tiện ích</div>
<svg class="r" style="left:568px;top:766px;" width="10" height="7" viewBox="0 0 10 7"><path d="M0.5 0.5H9.5L5 6Z" fill="#fff"/></svg>
<div class="r" style="left:602px;top:762px;width:2px;height:18px;background:#575967;"></div>
<svg class="r" style="left:626px;top:759px;" width="24" height="24" viewBox="0 0 24 24"><g fill="none" stroke="#a2a3ab" stroke-width="1.7" stroke-linejoin="round"><path d="M5.3 7V3.2 Q5.3 1.8 6.7 1.8H18.3 Q19.7 1.8 19.7 3.2V7"/><path d="M5 16.6H3.7 Q2 16.6 2 14.9V9 Q2 7.1 3.9 7.1H21 Q22.9 7.1 22.9 9V14.9 Q22.9 16.6 21.2 16.6H20"/><path d="M5 13.2H20V20.9 Q20 22.5 18.4 22.5H6.6 Q5 22.5 5 20.9Z"/></g></svg>
<div class="t" style="left:658.3px;top:764.15px;font-size:14px;line-height:14px;font-weight:bold;color:#a2a3ab;letter-spacing:0.3px;">In</div>
<svg class="r" style="left:689px;top:766px;" width="10" height="7" viewBox="0 0 10 7"><path d="M0.6 0.6H8.8L4.7 6Z" fill="#a2a3ab"/></svg>
<div class="r" style="left:715px;top:762px;width:2px;height:18px;background:#575967;"></div>
<svg class="r" style="left:734px;top:759px;" width="22" height="24" viewBox="0 0 22 24"><g fill="none" stroke="#a2a3ab" stroke-width="1.7" stroke-linejoin="round" stroke-linecap="round"><path d="M12.2 1.5H4 Q2 1.5 2 3.5V20.5 Q2 22.5 4 22.5H17.5 Q19.5 22.5 19.5 20.5V8.3Z"/><path d="M5.8 8.8H8.2M6 13.1H15.4M6 17.2H15.4"/></g><path d="M12.2 1.5L19.5 8.3H12.2Z" fill="#a2a3ab"/></svg>
<div class="t" style="left:764.4px;top:764.15px;font-size:14px;line-height:14px;font-weight:bold;color:#a2a3ab;letter-spacing:0.2px;">Duyệt</div>
<div class="r" style="left:830px;top:762px;width:2px;height:18px;background:#575967;"></div>
<svg class="r" style="left:848px;top:759px;" width="24" height="24" viewBox="0 0 24 24"><g fill="none" stroke="#a2a3ab" stroke-width="1.7" stroke-linejoin="round" stroke-linecap="round"><path d="M1.8 5.6H21.7M7 5.6V3.6 Q7 1.6 9 1.6H14.6 Q16.6 1.6 16.6 3.6V5.6M4.4 8L5.5 20.6 Q5.7 22.2 7.3 22.2H16.4 Q18 22.2 18.2 20.6L19.3 8M9.7 11.2V17.6M14 11.2V17.6"/></g></svg>
<div class="t" style="left:881px;top:764.15px;font-size:14px;line-height:14px;font-weight:bold;color:#a2a3ab;letter-spacing:0.2px;">Xóa</div>
</body></html>
